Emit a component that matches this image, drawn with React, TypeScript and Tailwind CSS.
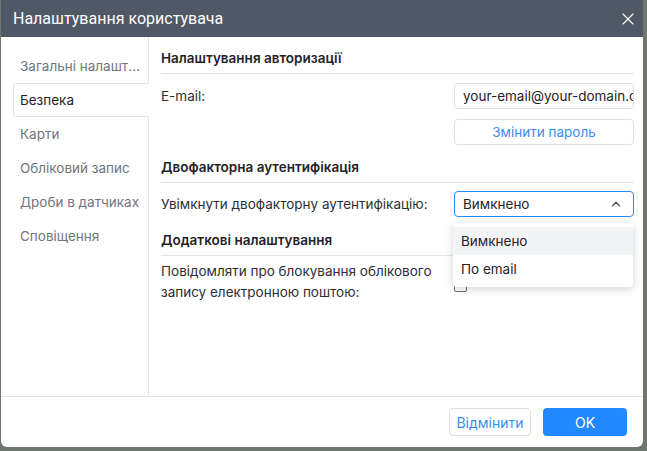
import { ChevronUp, X } from 'lucide-react';

const menu = ['Загальні налаштування', 'Безпека', 'Карти', 'Обліковий запис', 'Дроби в датчиках', 'Сповіщення'];

function SectionTitle({ children }: { children: React.ReactNode }) {
  return (
    <div className="leading-[19px] pb-[5px] border-b border-[#e3e4e6] font-semibold text-[#1f2329]">
      {children}
    </div>
  );
}

export default function App() {
  return (
    <div className="w-[647px] h-[451px] bg-[#6f7670] overflow-hidden" style={{ fontFamily: 'Inter, "Noto Sans", sans-serif' }}>
      <div className="ml-px w-[642px] h-[447px] bg-white rounded-b-md flex flex-col overflow-hidden text-[13.5px]">
        {/* Header */}
        <div className="h-[37px] shrink-0 bg-[#505866] flex items-center justify-between pl-3 pr-[5px] text-white">
          <span className="text-[16px]" style={{ fontFamily: 'Roboto, sans-serif' }}>Налаштування користувача</span>
          <X className="w-5 h-5" strokeWidth={1.3} />
        </div>

        {/* Body */}
        <div className="flex flex-1 min-h-0">
          <div className="w-[148px] shrink-0 border-r border-[#e3e4e6] pl-[12px] pt-[12px] flex flex-col">
            {menu.map((item, i) => (
              <div
                key={item}
                className={
                  i === 1
                    ? 'h-[34px] flex items-center pl-[6px] pr-2 -mr-px bg-white border border-r-0 border-[#e3e4e6] rounded-l text-[#1f2329] relative z-10'
                    : 'h-[34px] flex items-center pl-[7px] pr-2 text-[#70757c] whitespace-nowrap overflow-hidden'
                }
              >
                <span className="truncate">{item}</span>
              </div>
            ))}
          </div>

          <div className="flex-1 pl-3 pr-[9px] pt-[12px] relative">
            <SectionTitle>Налаштування авторизації</SectionTitle>
            <div className="flex items-start justify-between pt-[9px]">
              <span className="text-[#2b2f35] leading-[26px]">E-mail:</span>
              <div className="w-[180px] flex flex-col gap-[10px]">
                <div className="h-[26px] border border-[#dcdee2] rounded flex items-center pl-2 overflow-hidden whitespace-nowrap text-[#1f2329]">
                  your-email@your-domain.com
                </div>
                <div className="h-[26px] border border-[#dcdee2] rounded flex items-center justify-center text-[#3a8ef0]">
                  Змінити пароль
                </div>
              </div>
            </div>

            <div className="mt-[13px]">
              <SectionTitle>Двофакторна аутентифікація</SectionTitle>
            </div>
            <div className="flex items-center justify-between pt-[8px]">
              <span className="text-[#2b2f35]">Увімкнути двофакторну аутентифікацію:</span>
              <div className="w-[180px] h-[26px] border border-[#2a8af5] rounded flex items-center justify-between pl-2 pr-[10px] text-[#1f2329]">
                <span>Вимкнено</span>
                <ChevronUp className="w-[14px] h-[14px] text-[#4a4f57]" strokeWidth={2.2} />
              </div>
            </div>

            <div className="mt-[14px]">
              <SectionTitle>Додаткові налаштування</SectionTitle>
            </div>
            <div className="flex items-start justify-between pt-[5px]">
              <span className="text-[#2b2f35] leading-[21px] w-[285px]">
                Повідомляти про блокування облікового запису електронною поштою:
              </span>
              <div className="w-[180px] pt-[18px]">
                <div className="w-[13px] h-[13px] border border-[#6b6f75] rounded-[2px]" />
              </div>
            </div>

            {/* Dropdown */}
            <div className="absolute left-[304px] top-[186px] w-[180px] bg-white rounded shadow-[0_2px_8px_rgba(0,0,0,0.18)] py-[4px] text-[#1f2329]">
              <div className="h-[28px] flex items-center pl-2 bg-[#f3f4f6]">Вимкнено</div>
              <div className="h-[28px] flex items-center pl-2">По email</div>
            </div>
          </div>
        </div>

        {/* Footer */}
        <div className="h-[51px] shrink-0 border-t border-[#e3e4e6] flex items-center justify-end gap-3 pr-[16px]">
          <button className="w-[82px] h-[28px] border border-[#dcdee2] rounded text-[#3a8ef0] text-[14px]">Відмінити</button>
          <button className="w-[84px] h-[28px] rounded bg-[#2188ff] text-white text-[14px]">OK</button>
        </div>
      </div>
    </div>
  );
}
